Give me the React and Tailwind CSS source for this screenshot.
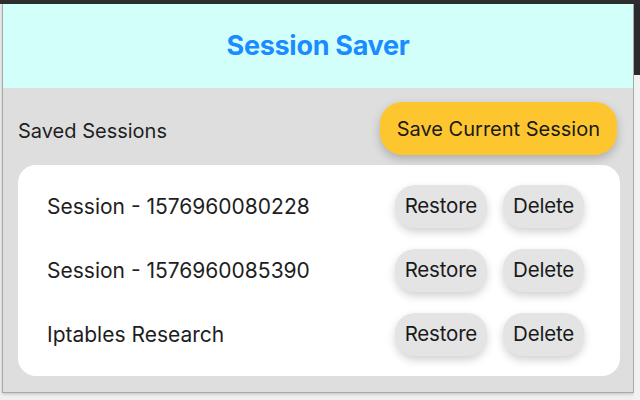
const sessions = [
  { id: 1, name: 'Session - 1576960080228' },
  { id: 2, name: 'Session - 1576960085390' },
  { id: 3, name: 'Iptables Research' },
];

function PillButton({ children }) {
  return (
    <button className="h-[43px] px-[10px] rounded-[20px] bg-[#e4e4e4] text-[20.5px] text-[#1a1a1a] tracking-[-0.2px] shadow-[0_4px_8px_rgba(0,0,0,0.18)]">
      {children}
    </button>
  );
}

export default function App() {
  return (
    <div className="w-[640px] h-[400px] bg-[#efefef] flex flex-col overflow-hidden" style={{ fontFamily: 'Inter, "Noto Sans", sans-serif' }}>
      {/* browser chrome strip */}
      <div className="h-[4px] bg-[#2e2e2e] shrink-0" />

      <div className="flex flex-1 min-h-0">
        {/* popup */}
        <div className="ml-[2px] w-[632px] h-[389px] flex flex-col border-l border-r border-b border-[#a9a9a9] shadow-[0_1px_3px_rgba(0,0,0,0.2)]">
          {/* Header */}
          <div className="h-[84px] bg-[#d3fffb] flex items-center justify-center shrink-0">
            <h1 className="text-[27px] font-bold text-[#1b8cff] tracking-[-0.3px]">Session Saver</h1>
          </div>

          {/* Body */}
          <div className="flex-1 bg-[#dedede] pl-[15px] pr-[16px] pt-[14px]">
            <div className="flex items-center justify-between">
              <span className="text-[20px] text-[#1e1e1e] mt-[4px]">Saved Sessions</span>
              <button className="h-[53px] px-[17px] rounded-[22px] bg-[#fec62e] text-[20px] text-[#1a1a1a] shadow-[0_4px_10px_rgba(0,0,0,0.22)]">
                Save Current Session
              </button>
            </div>

            {/* Session list */}
            <div className="mt-[10px] mr-[-3px] bg-white rounded-[18px] pl-[29px] pr-[36px] py-[20px] flex flex-col gap-[21px]">
              {sessions.map((s) => (
                <div key={s.id} className="flex items-center justify-between">
                  <span className="text-[21px] text-[#1e1e1e]">{s.name}</span>
                  <div className="flex gap-[16px]">
                    <PillButton>Restore</PillButton>
                    <PillButton>Delete</PillButton>
                  </div>
                </div>
              ))}
            </div>
          </div>
        </div>

        {/* sliver of window behind */}
        <div className="flex-1 flex flex-col">
          <div className="h-[71px] bg-[#2b2b2b]" />
          <div className="flex-1 bg-[#f2f2f2]" />
        </div>
      </div>
    </div>
  );
}
